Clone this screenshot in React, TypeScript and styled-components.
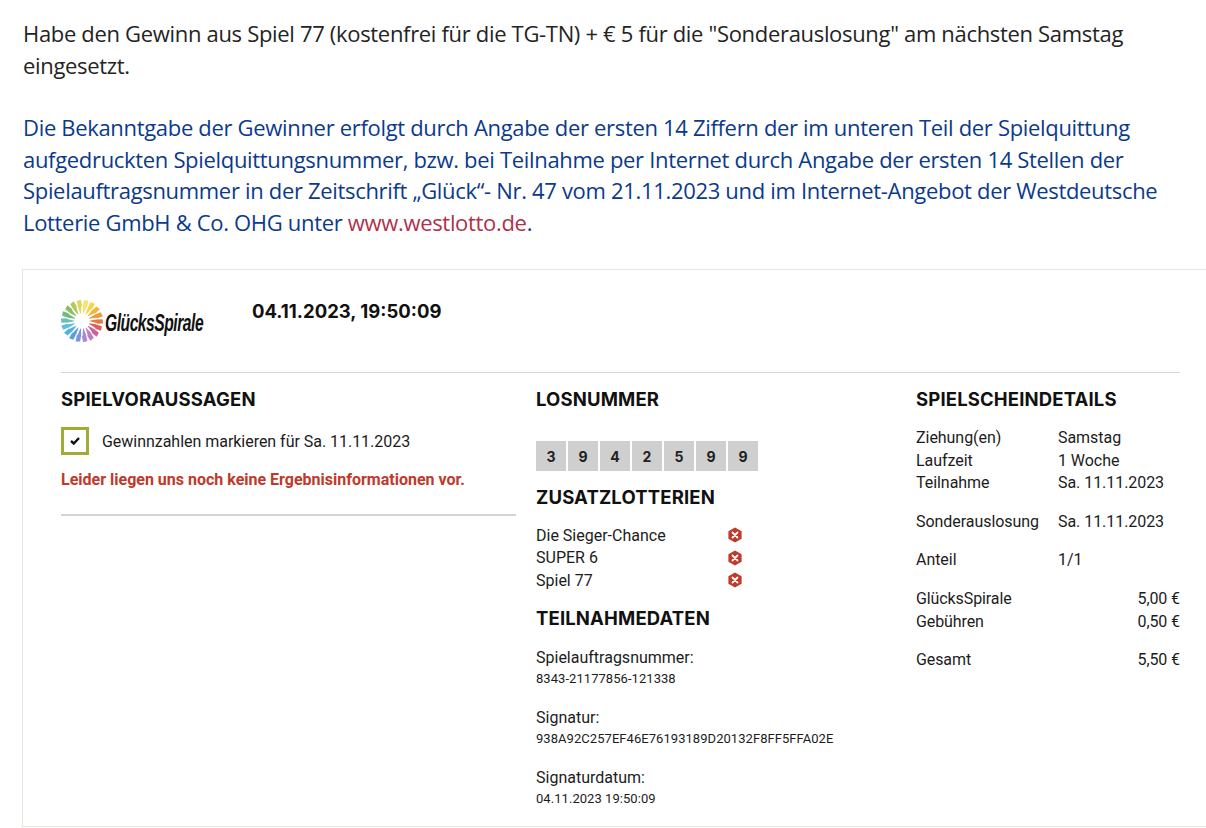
import { FC } from 'react';
import styled, { createGlobalStyle } from 'styled-components';

const GlobalStyle = createGlobalStyle`
  html, body {
    margin: 0;
    padding: 0;
    background: #fff;
    overflow: hidden;
  }
`;

const rayColors = [
  '#f6e36a', '#f8d24a', '#f5b53a', '#ee9a3a', '#e57a45', '#dc5f5a',
  '#d0609a', '#c07cc6', '#a78ad2', '#7c94d8', '#5a9fdc', '#52b2e0',
  '#62c0dc', '#6cc0b8', '#6fba7c', '#8cc05e', '#b0ca5c', '#dcd862'
];

const WheelSvg = styled.svg`
  flex: none;
`;

const Wheel: FC = () => (
  <WheelSvg width="42" height="42" viewBox="-21 -21 42 42">
    {rayColors.map((color, i) => {
      const angle = (i * 360) / rayColors.length;
      return (
        <path
          key={color}
          d="M-0.3 -7.5 L0.3 -7.5 L2 -14 L2.8 -14.6 L2.6 -20.5 L-1.8 -20.5 L-1.6 -14 Z"
          fill={color}
          transform={`rotate(${angle}) skewX(-10)`}
        />
      );
    })}
  </WheelSvg>
);

const Page = styled.div`
  width: 1206px;
  height: 828px;
  overflow: hidden;
  padding: 18px 0 0 23px;
  box-sizing: border-box;
  font-family: 'Open Sans', 'Noto Sans', sans-serif;
`;

const Post = styled.p<{ $blue?: boolean }>`
  margin: 0 0 31px;
  width: 1160px;
  font-size: 22px;
  line-height: 31.5px;
  letter-spacing: -0.32px;
  color: ${p => (p.$blue ? '#0b3a8c' : '#242424')};
`;

const PostLink = styled.span`
  color: #b0314a;
`;

const Card = styled.div`
  margin-left: -1px;
  width: 1184px;
  height: 558px;
  box-sizing: border-box;
  border: 1px solid #e6e6df;
  border-right: none;
  padding: 30px 26px 0 38px;
  font-family: Roboto, 'Liberation Sans', sans-serif;
  color: #1c1c1c;
`;

const Header = styled.div`
  display: flex;
  height: 72px;
  border-bottom: 1px solid #d6d6d6;
`;

const Logo = styled.div`
  flex: none;
  width: 191px;
  height: 42px;
  display: flex;
  align-items: center;
  gap: 2px;
`;

const LogoText = styled.span`
  font-family: 'Liberation Sans', sans-serif;
  font-style: italic;
  font-weight: 700;
  font-size: 24px;
  letter-spacing: -0.7px;
  color: #111;
  margin-top: 3px;
  transform: scaleX(0.65);
  transform-origin: left center;
`;

const Stamp = styled.div`
  font-family: Inter, 'Liberation Sans', sans-serif;
  font-weight: 700;
  font-size: 18.5px;
  line-height: 22px;
  color: #111;
`;

const Columns = styled.div`
  display: grid;
  grid-template-columns: 475px 380px 1fr;
`;

const Column = styled.div`
  display: flex;
  flex-direction: column;
  padding-top: 14px;
`;

const Heading = styled.h3`
  margin: 0;
  font-family: Inter, 'Liberation Sans', sans-serif;
  font-weight: 700;
  font-size: 18.5px;
  line-height: 24px;
  letter-spacing: 0.15px;
  color: #111;
`;

const MarkRow = styled.div`
  display: flex;
  align-items: center;
  gap: 13px;
  margin-top: 16px;
  font-size: 16px;
  letter-spacing: -0.03px;
`;

const CheckBox = styled.span`
  width: 28px;
  height: 28px;
  box-sizing: border-box;
  border: 3px solid #a3aa35;
  display: flex;
  align-items: center;
  justify-content: center;
`;

const ErrorText = styled.div`
  margin-top: 14px;
  width: 455px;
  padding-bottom: 23px;
  border-bottom: 2px solid #d4d4d4;
  font-weight: 700;
  font-size: 16px;
  line-height: 22px;
  color: #c0392b;
`;

const Digits = styled.div`
  display: flex;
  gap: 2px;
  margin-top: 30px;
`;

const Digit = styled.span`
  width: 30px;
  height: 30px;
  background: #cfcfcf;
  display: flex;
  align-items: center;
  justify-content: center;
  font-family: Inter, 'Liberation Sans', sans-serif;
  font-weight: 700;
  font-size: 14px;
  color: #222;
`;

const SectionHeading = styled(Heading)`
  margin-top: 14px;
`;

const LotteryList = styled.div`
  margin-top: 15px;
  width: 207px;
`;

const LotteryRow = styled.div`
  display: flex;
  justify-content: space-between;
  align-items: center;
  height: 22.5px;
  font-size: 16px;
`;

const DataBlock = styled.div`
  margin-top: 18px;
  font-size: 16px;
  line-height: 22px;
`;

const FirstDataBlock = styled(DataBlock)`
  margin-top: 17px;
`;

const DataValue = styled.div`
  font-size: 13px;
  line-height: 20px;
  letter-spacing: 0.05px;
`;

const DetailList = styled.div`
  margin-top: 16px;
  font-size: 16px;
`;

const DetailGroup = styled.div`
  margin-bottom: 16px;
`;

const DetailRow = styled.div`
  display: grid;
  grid-template-columns: 142px 1fr;
  line-height: 22.6px;
  letter-spacing: -0.05px;
`;

const PriceRow = styled.div`
  display: flex;
  justify-content: space-between;
  line-height: 22.6px;
  letter-spacing: -0.1px;
`;

const NoIcon: FC = () => (
  <svg width="16" height="16" viewBox="0 0 16 16">
    <path d="M8 0.5 L14.6 4.2 V11.8 L8 15.5 L1.4 11.8 V4.2 Z" fill="#c0392b" />
    <path d="M5.5 5.5 L10.5 10.5 M10.5 5.5 L5.5 10.5" stroke="#fff" strokeWidth="1.8" strokeLinecap="round" />
  </svg>
);

const digits = ['3', '9', '4', '2', '5', '9', '9'];
const lotteries = ['Die Sieger-Chance', 'SUPER 6', 'Spiel 77'];

export default function App() {
  return (
    <Page>
      <GlobalStyle />
      <Post>
        Habe den Gewinn aus Spiel 77 (kostenfrei für die TG-TN) + € 5 für die "Sonderauslosung" am nächsten Samstag eingesetzt.
      </Post>
      <Post $blue>
        Die Bekanntgabe der Gewinner erfolgt durch Angabe der ersten 14 Ziffern der im unteren Teil der Spielquittung
        aufgedruckten Spielquittungsnummer, bzw. bei Teilnahme per Internet durch Angabe der ersten 14 Stellen der
        Spielauftragsnummer in der Zeitschrift „Glück“- Nr. 47 vom 21.11.2023 und im Internet-Angebot der Westdeutsche
        Lotterie GmbH &amp; Co. OHG unter <PostLink>www.westlotto.de</PostLink>.
      </Post>
      <Card>
        <Header>
          <Logo>
            <Wheel />
            <LogoText>GlücksSpirale</LogoText>
          </Logo>
          <Stamp>04.11.2023, 19:50:09</Stamp>
        </Header>
        <Columns>
          <Column>
            <Heading>SPIELVORAUSSAGEN</Heading>
            <MarkRow>
              <CheckBox>
                <svg width="10" height="8" viewBox="0 0 10 8">
                  <path d="M1 4 L3.8 6.5 L9 1" fill="none" stroke="#111" strokeWidth="2.4" />
                </svg>
              </CheckBox>
              Gewinnzahlen markieren für Sa. 11.11.2023
            </MarkRow>
            <ErrorText>Leider liegen uns noch keine Ergebnisinformationen vor.</ErrorText>
          </Column>
          <Column>
            <Heading>LOSNUMMER</Heading>
            <Digits>
              {digits.map((digit, i) => (
                <Digit key={i}>{digit}</Digit>
              ))}
            </Digits>
            <SectionHeading>ZUSATZLOTTERIEN</SectionHeading>
            <LotteryList>
              {lotteries.map(name => (
                <LotteryRow key={name}>
                  {name}
                  <NoIcon />
                </LotteryRow>
              ))}
            </LotteryList>
            <SectionHeading>TEILNAHMEDATEN</SectionHeading>
            <FirstDataBlock>
              Spielauftragsnummer:
              <DataValue>8343-21177856-121338</DataValue>
            </FirstDataBlock>
            <DataBlock>
              Signatur:
              <DataValue>938A92C257EF46E76193189D20132F8FF5FFA02E</DataValue>
            </DataBlock>
            <DataBlock>
              Signaturdatum:
              <DataValue>04.11.2023 19:50:09</DataValue>
            </DataBlock>
          </Column>
          <Column>
            <Heading>SPIELSCHEINDETAILS</Heading>
            <DetailList>
              <DetailGroup>
                <DetailRow><span>Ziehung(en)</span><span>Samstag</span></DetailRow>
                <DetailRow><span>Laufzeit</span><span>1 Woche</span></DetailRow>
                <DetailRow><span>Teilnahme</span><span>Sa. 11.11.2023</span></DetailRow>
              </DetailGroup>
              <DetailGroup>
                <DetailRow><span>Sonderauslosung</span><span>Sa. 11.11.2023</span></DetailRow>
              </DetailGroup>
              <DetailGroup>
                <DetailRow><span>Anteil</span><span>1/1</span></DetailRow>
              </DetailGroup>
              <DetailGroup>
                <PriceRow><span>GlücksSpirale</span><span>5,00 €</span></PriceRow>
                <PriceRow><span>Gebühren</span><span>0,50 €</span></PriceRow>
              </DetailGroup>
              <PriceRow><span>Gesamt</span><span>5,50 €</span></PriceRow>
            </DetailList>
          </Column>
        </Columns>
      </Card>
    </Page>
  );
}
